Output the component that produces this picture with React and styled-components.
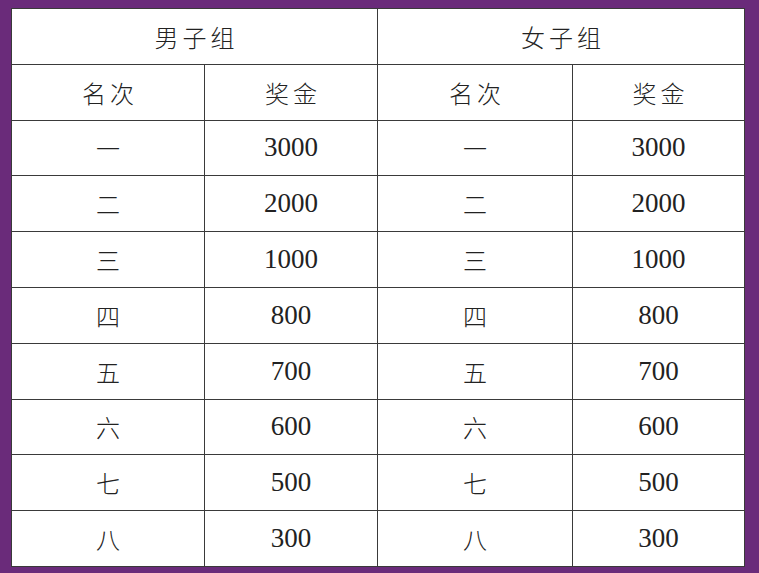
import React from 'react';
import styled, { createGlobalStyle } from 'styled-components';

const GlobalStyle = createGlobalStyle`
  html, body {
    margin: 0;
    padding: 0;
    background: #6a2b7a;
  }
`;

const Page = styled.div`
  width: 759px;
  height: 573px;
  box-sizing: border-box;
  padding: 8px 0 0 11px;
  background: #6a2b7a;
`;

const Table = styled.table`
  width: 733px;
  border-collapse: collapse;
  table-layout: fixed;
  background: #ffffff;
`;

const Cell = styled.td`
  height: 55.8px;
  box-sizing: border-box;
  padding: 0;
  border: 1.3px solid #3a3a3a;
  text-align: center;
  vertical-align: middle;
  color: #222;
  font-family: ${p => p.$num ? '"Liberation Serif", "Times New Roman", serif' : '"Noto Sans CJK SC", sans-serif'};
  font-size: ${p => p.$num ? '27px' : '24px'};
  font-weight: ${p => p.$num ? 400 : 300};
  letter-spacing: ${p => p.$spaced ? '4px' : '0'};
  text-indent: ${p => p.$spaced ? '4px' : '0'};
`;

const rows = [
  ['一', '3000'],
  ['二', '2000'],
  ['三', '1000'],
  ['四', '800'],
  ['五', '700'],
  ['六', '600'],
  ['七', '500'],
  ['八', '300'],
];

export default function App() {
  return (
    <>
      <GlobalStyle />
      <Page>
        <Table>
          <colgroup>
            <col style={{ width: 193 }} />
            <col style={{ width: 173 }} />
            <col style={{ width: 195 }} />
            <col style={{ width: 172 }} />
          </colgroup>
          <tbody>
            <tr>
              <Cell colSpan={2} $spaced>男子组</Cell>
              <Cell colSpan={2} $spaced>女子组</Cell>
            </tr>
            <tr>
              <Cell $spaced>名次</Cell>
              <Cell $spaced>奖金</Cell>
              <Cell $spaced>名次</Cell>
              <Cell $spaced>奖金</Cell>
            </tr>
            {rows.map(([rank, prize]) => (
              <tr key={rank}>
                <Cell>{rank}</Cell>
                <Cell $num>{prize}</Cell>
                <Cell>{rank}</Cell>
                <Cell $num>{prize}</Cell>
              </tr>
            ))}
          </tbody>
        </Table>
      </Page>
    </>
  );
}
